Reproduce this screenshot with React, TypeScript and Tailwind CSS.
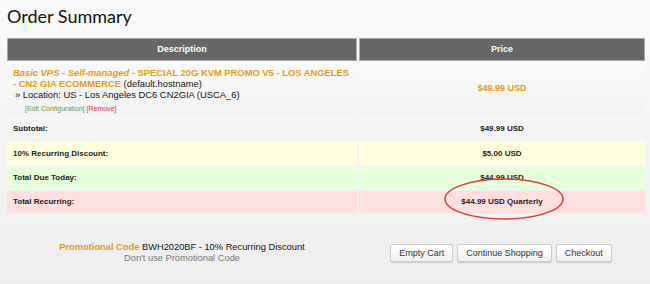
import React from 'react';

interface SummaryRow {
  label: string;
  value: string;
  bg: string;
  h: string;
}

const rows: SummaryRow[] = [
  { label: 'Subtotal:', value: '$49.99 USD', bg: 'bg-[#f5f5f5]', h: 'h-[23px]' },
  { label: '10% Recurring Discount:', value: '$5.00 USD', bg: 'bg-[#ffffdd]', h: 'h-[23px]' },
  { label: 'Total Due Today:', value: '$44.99 USD', bg: 'bg-[#e6ffdd]', h: 'h-[22px]' },
  { label: 'Total Recurring:', value: '$44.99 USD Quarterly', bg: 'bg-[#ffdfdf]', h: 'h-[22px]' },
];

const btn =
  'h-[18px] rounded-[2px] border border-[#ccc] bg-gradient-to-b from-white to-[#f1f1f1] px-[8px] text-[9px] leading-[16px] text-[#333] shadow-[0_1px_1px_rgba(0,0,0,0.15)]';

const App: React.FC = () => {
  return (
    <div className="relative h-[284px] w-[650px] overflow-hidden bg-gradient-to-b from-[#fafafa] to-[#eeeeee] font-['Liberation_Sans',Arial,sans-serif] text-[#222]">
      <h1 className="pl-[7px] pt-[3px] font-['Lato',sans-serif] text-[18px] leading-[26px] text-[#111]">
        Order Summary
      </h1>

      <table className="mt-[7px] ml-[5px] w-[642px] border-separate border-spacing-[2px] table-fixed">
        <thead>
          <tr>
            <th className="h-[23px] w-[350px] border border-[#aaa] bg-[#666] text-center text-[9px] font-bold text-white">
              Description
            </th>
            <th className="h-[23px] border border-[#aaa] bg-[#666] text-center text-[9px] font-bold text-white">
              Price
            </th>
          </tr>
        </thead>
        <tbody>
          <tr>
            <td className="h-[52px] bg-gradient-to-b from-[#fafafa] to-[#f2f2f2] px-[6px] pt-[4px] align-top text-[9.4px] leading-[11px]">
              <div>
                <span className="font-bold text-[#e59c12]">
                  <em>Basic VPS - Self-managed</em> - SPECIAL 20G KVM PROMO V5 - LOS ANGELES - CN2 GIA ECOMMERCE
                </span>{' '}
                <span className="text-[#111]">(default.hostname)</span>
              </div>
              <div className="pl-[2px] text-[#111]">» Location: US - Los Angeles DC6 CN2GIA (USCA_6)</div>
              <div className="pl-[12px] pt-[4px] text-[7px] leading-[10px]">
                <span className="text-[#6f9c2c]">[Edit Configuration]</span>{' '}
                <span className="text-[#d9363e]">[Remove]</span>
              </div>
            </td>
            <td className="bg-gradient-to-b from-[#fafafa] to-[#f2f2f2] text-center text-[9px] font-bold text-[#e59c12]">
              $49.99 USD
            </td>
          </tr>
          {rows.map(row => (
            <tr key={row.label}>
              <td className={`${row.h} px-[6px] text-[8px] font-bold text-[#222] ${row.bg}`}>{row.label}</td>
              <td className={`text-center text-[8px] font-bold text-[#222] ${row.bg}`}>{row.value}</td>
            </tr>
          ))}
        </tbody>
      </table>

      <div className="mt-[27px] ml-[7px] flex w-[638px] items-center">
        <div className="w-[350px] text-center text-[9.3px] leading-[11px]">
          <div>
            <span className="font-bold text-[#e59c12]">Promotional Code</span>{' '}
            <span className="text-[#111]">BWH2020BF - 10% Recurring Discount</span>
          </div>
          <div className="text-[#777]">Don&apos;t use Promotional Code</div>
        </div>
        <div className="flex flex-1 justify-center gap-[4px]">
          <button className={btn}>Empty Cart</button>
          <button className={btn}>Continue Shopping</button>
          <button className={btn}>Checkout</button>
        </div>
      </div>

      {/* red annotation circle around the recurring total */}
      <svg className="pointer-events-none absolute left-0 top-0" width="650" height="284">
        <ellipse cx="504" cy="199" rx="59" ry="20" fill="none" stroke="#e23b3b" strokeWidth="1.5" />
      </svg>
    </div>
  );
};

export default App;
